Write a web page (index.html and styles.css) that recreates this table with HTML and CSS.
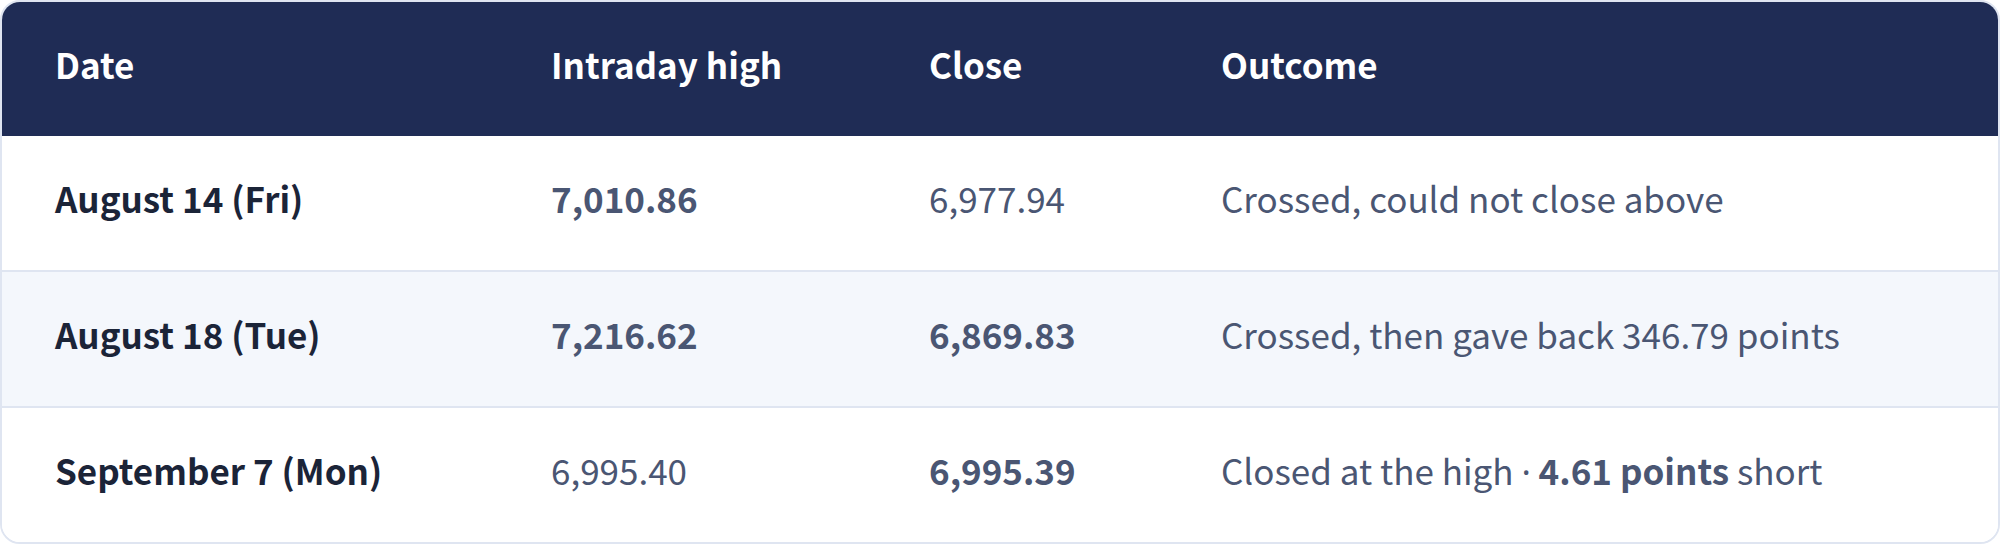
FILE: index.html
```html
<!DOCTYPE html>
<html lang="en">
<head>
<meta charset="utf-8">
<link rel="stylesheet" href="styles.css">
</head>
<body>
<div class="card">
  <table class="tbl">
    <colgroup>
      <col class="c-date">
      <col class="c-high">
      <col class="c-close">
      <col class="c-out">
    </colgroup>
    <thead>
      <tr>
        <th>Date</th>
        <th>Intraday high</th>
        <th>Close</th>
        <th>Outcome</th>
      </tr>
    </thead>
    <tbody>
      <tr>
        <td class="date">August 14 (Fri)</td>
        <td class="num strong">7,010.86</td>
        <td class="num">6,977.94</td>
        <td class="out">Crossed, could not close above</td>
      </tr>
      <tr class="alt">
        <td class="date">August 18 (Tue)</td>
        <td class="num strong">7,216.62</td>
        <td class="num strong">6,869.83</td>
        <td class="out">Crossed, then gave back 346.79 points</td>
      </tr>
      <tr>
        <td class="date">September 7 (Mon)</td>
        <td class="num">6,995.40</td>
        <td class="num strong">6,995.39</td>
        <td class="out">Closed at the high <span class="sep">·</span> <b>4.61 points</b> short</td>
      </tr>
    </tbody>
  </table>
</div>
</body>
</html>
```

FILE: styles.css
```css
html, body {
  margin: 0;
  padding: 0;
  background: #ffffff;
}
body {
  font-family: "Noto Sans CJK KR", "Noto Sans", sans-serif;
  font-variant-numeric: proportional-nums;
}
.card {
  width: 2000px;
  height: 544px;
  box-sizing: border-box;
  border: 2px solid #dfe5f1;
  border-radius: 20px;
  overflow: hidden;
}
.tbl {
  width: 100%;
  border-collapse: separate;
  border-spacing: 0;
  table-layout: fixed;
}
.c-date { width: 496px; }
.c-high { width: 378px; }
.c-close { width: 292px; }
.c-out { width: auto; }
th, td {
  text-align: left;
  padding: 0 0 11px 53px;
  font-size: 35px;
  white-space: nowrap;
}
thead tr {
  background: #1f2c55;
  height: 134px;
}
th {
  color: #ffffff;
  font-weight: 700;
}
tbody tr {
  height: 134px;
  background: #ffffff;
}
tbody tr + tr {
  height: 136px;
}
tbody tr + tr td {
  border-top: 2px solid #dfe5f1;
}
tbody tr.alt {
  background: #f4f7fc;
}
td {
  color: #4a5673;
  font-weight: 400;
}
td.date {
  color: #1b2438;
  font-weight: 700;
}
td.strong {
  font-weight: 700;
}
td.out b {
  font-weight: 700;
}
.sep {
  font-family: "Noto Sans", sans-serif;
}
```
